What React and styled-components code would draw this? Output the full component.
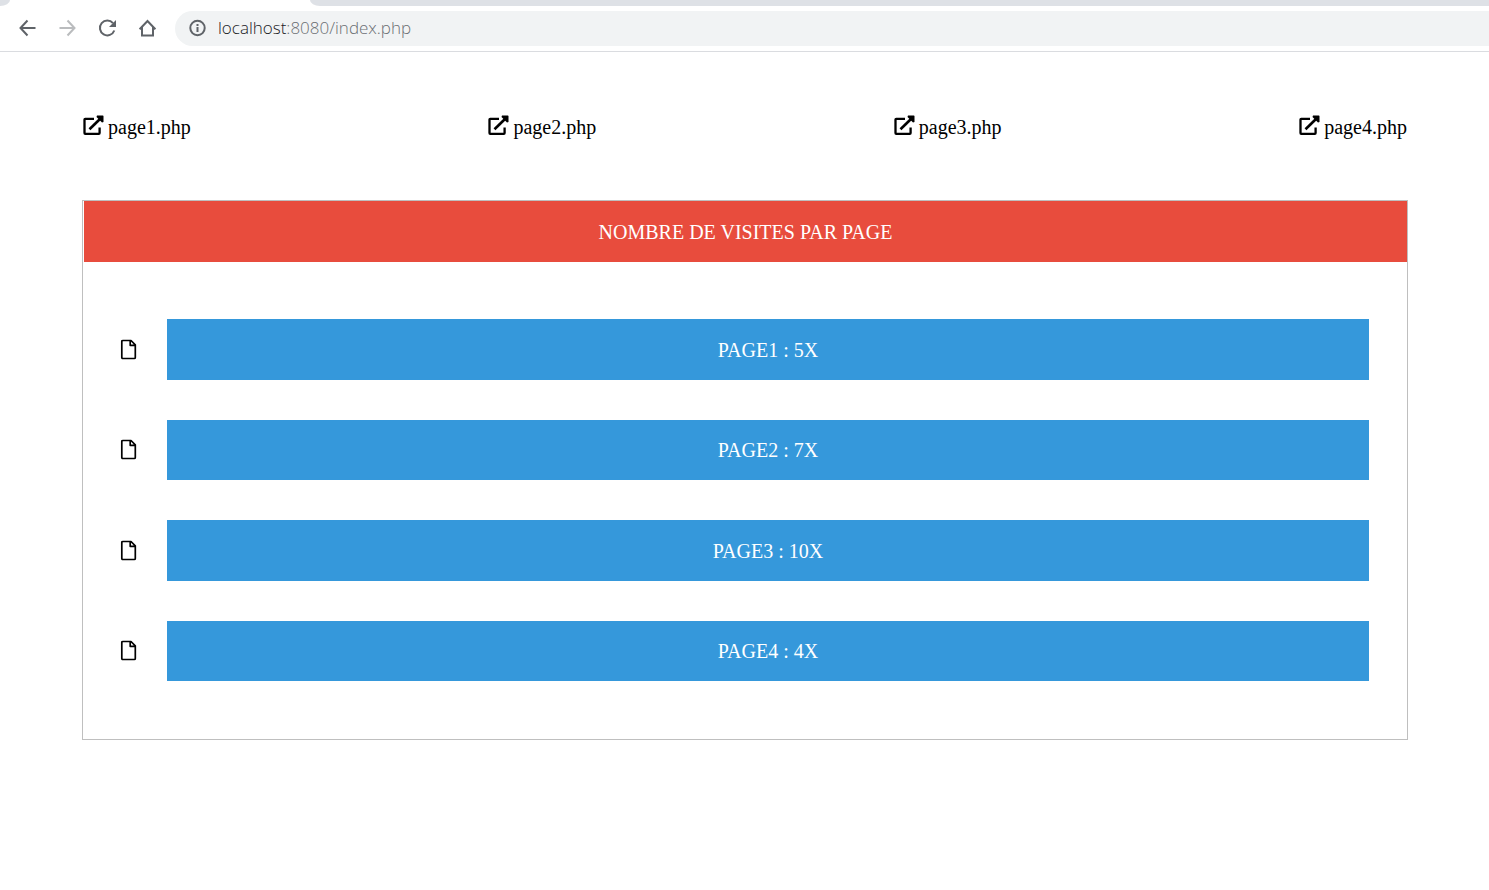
import React from "react";
import styled, { createGlobalStyle } from "styled-components";

const GlobalStyle = createGlobalStyle`
  * { box-sizing: border-box; }
  body {
    margin: 0;
    background: #fff;
    color: #000;
    font: 20px/24px "Liberation Serif", "Times New Roman", serif;
  }
`;

const TabStrip = styled.div`
  display: flex;
  justify-content: space-between;
  height: 6px;
  overflow: hidden;
`;

const TabEdge = styled.div`
  width: 10px;
  background: #dee1e6;
  border-bottom-right-radius: 10px 6px;
`;

const TabRest = styled.div`
  flex: 1;
  margin-left: 300px;
  background: #dee1e6;
  border-bottom-left-radius: 10px 6px;
`;

const Toolbar = styled.div`
  display: flex;
  align-items: center;
  height: 46px;
  padding: 0 0 1px 17px;
  border-bottom: 1px solid #dadce0;
`;

const ToolButton = styled.button`
  display: flex;
  width: 20px;
  height: 20px;
  margin-right: 20px;
  padding: 0;
  border: 0;
  background: none;
  color: #5f6368;
  &:disabled { color: #babcbe; }
`;

const AddressBar = styled.div`
  display: flex;
  flex: 1;
  align-items: center;
  gap: 10px;
  height: 35px;
  margin-left: -2px;
  padding-left: 13px;
  border-radius: 18px 0 0 18px;
  background: #f1f3f4;
  color: #5f6368;
`;

const Address = styled.div`
  color: #6b6f73;
  font: 300 17px/24px "Open Sans", "Segoe UI", sans-serif;
`;

const Host = styled.span`
  color: #202124;
`;

const Main = styled.main`
  padding: 62px 81px 0 82px;
`;

const Nav = styled.nav`
  display: flex;
  justify-content: space-between;
  padding: 0 1px 0 1px;
`;

const PageLink = styled.a`
  display: flex;
  align-items: flex-start;
  gap: 4px;
  padding-top: 1px;
  color: inherit;
  text-decoration: none;
`;

const Panel = styled.section`
  margin-top: 61px;
  border: 1px solid #bfbfbf;
`;

const Title = styled.h1`
  margin: 0 0 0 1px;
  padding: 19px 0 18px;
  background: #e84c3d;
  color: #fff;
  font: inherit;
  text-align: center;
  text-transform: uppercase;
`;

const VisitList = styled.ul`
  display: grid;
  grid-auto-rows: 1fr;
  gap: 40px;
  min-height: 362px;
  margin: 57px 38px 58px 37px;
  padding: 0;
  list-style: none;
`;

const Visit = styled.li`
  display: flex;
  align-items: center;
  gap: 30px;
`;

const VisitBar = styled.div`
  display: flex;
  flex: 1;
  align-items: center;
  justify-content: center;
  align-self: stretch;
  padding-top: 1px;
  background: #3598db;
  color: #fff;
  text-transform: uppercase;
`;

const ExternalIcon = () => (
  <svg width="21" height="21" viewBox="0 0 21 21" aria-hidden="true">
    <path
      d="M11 3.8H2.2Q1.5 3.8 1.5 4.5V18Q1.5 18.8 2.2 18.8H15.8Q16.6 18.8 16.6 18V12.5"
      fill="none"
      stroke="currentColor"
      strokeWidth="2.3"
    />
    <path d="M6.5 14.3L17 4" stroke="currentColor" strokeWidth="2.6" />
    <path d="M14 0.5H19.8Q20.5 0.5 20.5 1.2V7L19 7.5L13.5 2Z" fill="currentColor" />
  </svg>
);

const FileIcon = () => (
  <svg width="17" height="21" viewBox="0 0 17 21" aria-hidden="true">
    <path
      d="M3 1.5H11L15.3 5.8V18.5Q15.3 19.5 14.3 19.5H3Q1.8 19.5 1.8 18.5V2.5Q1.8 1.5 3 1.5ZM10.2 1.5V6.3H15.3"
      fill="none"
      stroke="currentColor"
      strokeWidth="1.7"
      strokeLinejoin="round"
    />
  </svg>
);

const pages = [
  { name: "page1", visits: 5 },
  { name: "page2", visits: 7 },
  { name: "page3", visits: 10 },
  { name: "page4", visits: 4 },
];

const Line = ({ children }) => (
  <svg width="20" height="20" viewBox="0 0 20 20" fill="none" stroke="currentColor" strokeWidth="2" aria-hidden="true">
    {children}
  </svg>
);

export default function App() {
  return (
    <>
      <GlobalStyle />
      <header>
        <TabStrip>
          <TabEdge />
          <TabRest />
        </TabStrip>
        <Toolbar>
          <ToolButton aria-label="Back">
            <Line><path d="M18.5 10H4M10.5 2.5L3.5 10L10.5 17.5" /></Line>
          </ToolButton>
          <ToolButton aria-label="Forward" disabled>
            <Line><path d="M2.5 10H17.5M10.5 2.5L17.5 10L10.5 17.5" /></Line>
          </ToolButton>
          <ToolButton aria-label="Reload">
            <Line>
              <path d="M16 5.2A7.4 7.4 0 1 0 17.3 12.5" />
              <path d="M19 2V9H12Z" fill="currentColor" stroke="none" />
            </Line>
          </ToolButton>
          <ToolButton aria-label="Home">
            <Line><path d="M2.6 11.2L10.5 3L18.4 11.2M5 9V17.5H16V9" /></Line>
          </ToolButton>
          <AddressBar>
            <Line>
              <circle cx="9.5" cy="10" r="7.2" />
              <path d="M9.5 9V14M9.5 6V8" />
            </Line>
            <Address role="textbox" aria-label="Address" tabIndex={0}>
              <Host>localhost</Host>:8080/index.php
            </Address>
          </AddressBar>
        </Toolbar>
      </header>
      <Main>
        <Nav>
          {pages.map(({ name }) => (
            <PageLink key={name} href={`${name}.php`}>
              <ExternalIcon />
              {name}.php
            </PageLink>
          ))}
        </Nav>
        <Panel>
          <Title>Nombre de visites par page</Title>
          <VisitList>
            {pages.map(({ name, visits }) => (
              <Visit key={name}>
                <FileIcon />
                <VisitBar>{`${name} : ${visits}x`}</VisitBar>
              </Visit>
            ))}
          </VisitList>
        </Panel>
      </Main>
    </>
  );
}
